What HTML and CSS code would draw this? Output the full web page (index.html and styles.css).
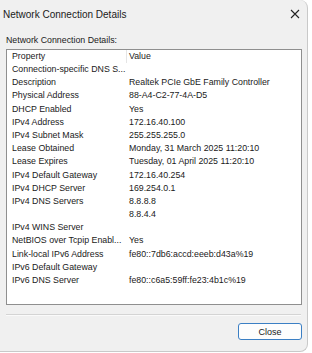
FILE: index.html
```html
<!DOCTYPE html>
<html lang="en">
<head>
  <title>Network Connection Details</title>
  <meta charset="UTF-8">
  <link rel="stylesheet" href="styles.css">
</head>
<body>
  <div class="window">
    <div class="titlebar">
      <span class="title">Network Connection Details</span>
      <svg class="close-x" width="10" height="10" viewBox="0 0 10 10">
        <path d="M1 1 L9 9 M9 1 L1 9" stroke="#222" stroke-width="1.1" fill="none"/>
      </svg>
    </div>

    <div class="content">
      <div class="label">Network Connection Details:</div>

      <div class="listbox">
        <div class="row head">
          <span class="col-prop">Property</span>
          <span class="col-val">Value</span>
        </div>
        <div class="row"><span class="col-prop">Connection-specific DNS S...</span><span class="col-val"></span></div>
        <div class="row"><span class="col-prop">Description</span><span class="col-val">Realtek PCIe GbE Family Controller</span></div>
        <div class="row"><span class="col-prop">Physical Address</span><span class="col-val">88-A4-C2-77-4A-D5</span></div>
        <div class="row"><span class="col-prop">DHCP Enabled</span><span class="col-val">Yes</span></div>
        <div class="row"><span class="col-prop">IPv4 Address</span><span class="col-val">172.16.40.100</span></div>
        <div class="row"><span class="col-prop">IPv4 Subnet Mask</span><span class="col-val">255.255.255.0</span></div>
        <div class="row"><span class="col-prop">Lease Obtained</span><span class="col-val">Monday, 31 March 2025 11:20:10</span></div>
        <div class="row"><span class="col-prop">Lease Expires</span><span class="col-val">Tuesday, 01 April 2025 11:20:10</span></div>
        <div class="row"><span class="col-prop">IPv4 Default Gateway</span><span class="col-val">172.16.40.254</span></div>
        <div class="row"><span class="col-prop">IPv4 DHCP Server</span><span class="col-val">169.254.0.1</span></div>
        <div class="row"><span class="col-prop">IPv4 DNS Servers</span><span class="col-val">8.8.8.8</span></div>
        <div class="row"><span class="col-prop"></span><span class="col-val">8.8.4.4</span></div>
        <div class="row"><span class="col-prop">IPv4 WINS Server</span><span class="col-val"></span></div>
        <div class="row"><span class="col-prop">NetBIOS over Tcpip Enabl...</span><span class="col-val">Yes</span></div>
        <div class="row"><span class="col-prop">Link-local IPv6 Address</span><span class="col-val">fe80::7db6:accd:eeeb:d43a%19</span></div>
        <div class="row"><span class="col-prop">IPv6 Default Gateway</span><span class="col-val"></span></div>
        <div class="row"><span class="col-prop">IPv6 DNS Server</span><span class="col-val">fe80::c6a5:59ff:fe23:4b1c%19</span></div>
      </div>

      <div class="separator"></div>

      <div class="actions">
        <button class="btn">Close</button>
      </div>
    </div>
  </div>
</body>
</html>
```

FILE: styles.css
```css
body {
  margin: 0;
  background: #ffffff;
  font-family: "Liberation Sans", Arial, sans-serif;
  color: #1a1a1a;
}
.window {
  width: 308px;
  height: 352px;
  background: #f0f0f0;
  border-right: 1px solid #c9c9c9;
  border-bottom: 1px solid #c9c9c9;
  border-radius: 0 8px 8px 0;
  box-sizing: border-box;
}
.titlebar {
  height: 28px;
  display: flex;
  align-items: center;
  justify-content: space-between;
  padding: 0 6px 0 3px;
}
.title {
  font-size: 10px;
}
.close-x {
  margin-right: 1px;
}
.content {
  padding: 0 5px 0 6px;
}
.label {
  font-size: 8.8px;
  height: 21px;
  line-height: 24px;
}
.listbox {
  background: #ffffff;
  border: 1px solid #8f8f8f;
  height: 256px;
  box-sizing: border-box;
  padding-left: 5px;
}
.row {
  display: flex;
  height: 13.2px;
  line-height: 13.2px;
  font-size: 8.8px;
  white-space: nowrap;
}
.row.head {
  height: 13px;
  line-height: 13px;
}
.col-prop {
  width: 117px;
  flex: none;
  overflow: hidden;
}
.head .col-prop {
  border-right: 1px solid #e5e5e5;
  width: 114px;
  margin-right: 2px;
}
.col-val {
  flex: 1;
}
.separator {
  margin: 9px 1px 0 0;
  border-top: 1px solid #d4d4d4;
  border-bottom: 1px solid #fafafa;
}
.actions {
  display: flex;
  justify-content: flex-end;
  padding-top: 7px;
}
.btn {
  width: 64px;
  height: 17px;
  border: 1px solid #3b7fc4;
  border-radius: 3px;
  background: #fdfdfd;
  font-family: "Liberation Sans", Arial, sans-serif;
  font-size: 9px;
  color: #1a1a1a;
  padding: 0;
}
```
